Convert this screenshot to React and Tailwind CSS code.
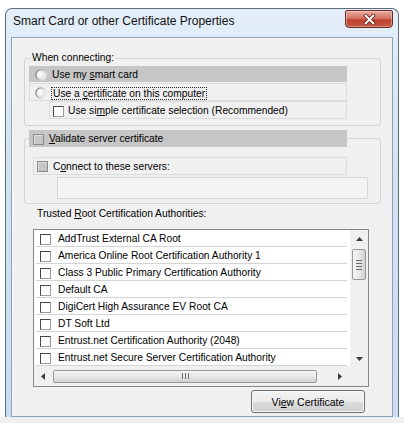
import React from "react";

const FONT = "font-['Liberation_Sans',Arial,sans-serif]";

function Radio() {
  return (
    <svg width="12" height="12" viewBox="0 0 12 12" className="shrink-0">
      <defs>
        <linearGradient id="rgS" x1="0" y1="0" x2="1" y2="0.4">
          <stop offset="0" stopColor="#707070" />
          <stop offset="0.6" stopColor="#b8b8b8" />
          <stop offset="1" stopColor="#ececec" />
        </linearGradient>
        <radialGradient id="rgF" cx="0.4" cy="0.4" r="0.7">
          <stop offset="0" stopColor="#ffffff" />
          <stop offset="1" stopColor="#dcdcdc" />
        </radialGradient>
      </defs>
      <circle cx="6" cy="6" r="5.1" fill="url(#rgF)" stroke="url(#rgS)" strokeWidth="1.3" />
    </svg>
  );
}

function Check({ disabled }) {
  if (disabled) {
    return (
      <span className="block w-[11px] h-[11px] shrink-0 border border-[#8a8a8a] bg-[#c6c6c6] shadow-[inset_1px_1px_0_#dedede]" />
    );
  }
  return (
    <span className="block w-[11px] h-[11px] shrink-0 border border-t-[#474747] border-l-[#474747] border-b-[#9c9c9c] border-r-[#9c9c9c] bg-white" />
  );
}

function ArrowUp() {
  return (
    <svg width="7" height="4" viewBox="0 0 7 4">
      <path d="M0 4 L3.5 0 L7 4 Z" fill="#3c3c3c" />
    </svg>
  );
}
function ArrowDown() {
  return (
    <svg width="7" height="4" viewBox="0 0 7 4">
      <path d="M0 0 L3.5 4 L7 0 Z" fill="#3c3c3c" />
    </svg>
  );
}
function ArrowLeft() {
  return (
    <svg width="4" height="7" viewBox="0 0 4 7">
      <path d="M4 0 L0 3.5 L4 7 Z" fill="#3c3c3c" />
    </svg>
  );
}
function ArrowRight() {
  return (
    <svg width="4" height="7" viewBox="0 0 4 7">
      <path d="M0 0 L4 3.5 L0 7 Z" fill="#3c3c3c" />
    </svg>
  );
}

const items = [
  "AddTrust External CA Root",
  "America Online Root Certification Authority 1",
  "Class 3 Public Primary Certification Authority",
  "Default CA",
  "DigiCert High Assurance EV Root CA",
  "DT Soft Ltd",
  "Entrust.net Certification Authority (2048)",
  "Entrust.net Secure Server Certification Authority",
];

export default function App() {
  return (
    <div className={`w-[404px] h-[423px] bg-white flex flex-col overflow-hidden text-black ${FONT}`}>
      {/* window */}
      <div className="ml-[5px] mt-[8px] w-[394px] h-[409px] border border-b-0 border-[#5d6d7d] rounded-t-[7px] bg-[linear-gradient(to_bottom,#e3eef8,#d2e3f2_40%,#cadcee)] flex flex-col">
        {/* title bar */}
        <div className="h-[28px] flex items-start shrink-0">
          <span className="ml-[7px] mt-[5px] text-[12px] leading-[14px] text-[#111]">
            Smart Card or other Certificate Properties
          </span>
          <div className="ml-auto mr-[5px] mt-[1px] w-[48px] h-[18px] border border-[#6e2b22] rounded-b-[4px] rounded-t-[2px] bg-[linear-gradient(to_bottom,#e9ab9c,#d57565_45%,#c0402f_55%,#c65845)] flex items-center justify-center shadow-[inset_0_0_0_1px_rgba(255,255,255,0.35)]">
            <svg width="13" height="11" viewBox="0 0 13 11">
              <path d="M2.5 1.5 L10.5 9.5 M10.5 1.5 L2.5 9.5" stroke="#5a1d15" strokeWidth="3.6" strokeLinecap="round" />
              <path d="M2.5 1.5 L10.5 9.5 M10.5 1.5 L2.5 9.5" stroke="#ffffff" strokeWidth="2" strokeLinecap="round" />
            </svg>
          </div>
        </div>

        {/* content */}
        <div className="ml-[5px] w-[382px] h-[380px] border border-[#8aa1b8] shadow-[inset_1px_1px_0_#fafafa] bg-[#f0f0f0] flex flex-col text-[10.25px] leading-[12px]">
          {/* group 1 */}
          <fieldset className="mt-[14px] ml-[12px] w-[357px] border border-[#d3d3d3] rounded-[3px] pb-[6px] flex flex-col">
            <legend className="ml-[6px] px-[1px] leading-[12px]">When connecting:</legend>
            <div className="mt-[2px] ml-[4px] w-[318px] h-[16px] bg-[#c6c6c6] flex items-center pt-[1px] pl-[6px] gap-[5px]">
              <Radio />
              <span>
                Use my <u>s</u>mart card
              </span>
            </div>
            <div className="mt-[1px] ml-[4px] w-[318px] h-[18px] border border-[#dcdcdc] flex items-center pt-[2px] pl-[5px] gap-[4px]">
              <Radio />
              <span className="border border-dotted border-[#2a2a2a] px-[1px] leading-[11px]">
                Use a <u>c</u>ertificate on this computer
              </span>
            </div>
            <div className="ml-[24px] w-[298px] h-[18px] border border-[#dcdcdc] flex items-center pt-[2px] pl-[3px] gap-[4px]">
              <Check />
              <span>
                Use si<u>m</u>ple certificate selection (Recommended)
              </span>
            </div>
          </fieldset>

          {/* group 2 */}
          <fieldset className="mt-[4px] ml-[12px] w-[357px] border border-[#d3d3d3] rounded-[3px] pb-[4px] flex flex-col">
            <legend className="ml-[4px] w-[318px] h-[17px] bg-[#c6c6c6] flex items-center pt-[1px] pl-[4px] gap-[5px]">
              <Check disabled />
              <span>
                <u>V</u>alidate server certificate
              </span>
            </legend>
            <div className="mt-[10px] ml-[8px] w-[314px] h-[18px] border border-[#dcdcdc] flex items-center pt-[1px] pl-[3px] gap-[5px]">
              <Check disabled />
              <span>
                C<u>o</u>nnect to these servers:
              </span>
            </div>
            <div className="mt-[2px] ml-[32px] w-[311px] h-[22px] border border-[#d6d6d6] bg-[#f3f3f3]" />
          </fieldset>

          <div className="mt-[4px] ml-[25px]">
            Trusted <u>R</u>oot Certification Authorities:
          </div>

          {/* list */}
          <div className="mt-[9px] ml-[21px] w-[336px] h-[158px] border border-[#828790] bg-white flex flex-col shrink-0">
            <div className="h-[136px] flex">
              <div className="w-[316px] pl-[2px] flex flex-col">
                {items.map((t) => (
                  <div
                    key={t}
                    className="w-[311px] h-[17px] shrink-0 border-b border-[#d4d4d4] flex items-center pt-[2px] pl-[4px] gap-[7px]"
                  >
                    <Check />
                    <span className="whitespace-nowrap">{t}</span>
                  </div>
                ))}
              </div>
              <div className="w-[18px] bg-[#f0f0f0] flex flex-col items-center">
                <div className="h-[17px] w-full flex items-center justify-center">
                  <ArrowUp />
                </div>
                <div className="mt-[2px] w-[14px] h-[31px] border border-[#979797] rounded-[2px] bg-[linear-gradient(to_right,#f6f6f6,#e4e4e4_60%,#d2d2d2)] flex flex-col items-center justify-center gap-[2px]">
                  <span className="block w-[6px] h-px bg-[#6a6a6a]" />
                  <span className="block w-[6px] h-px bg-[#6a6a6a]" />
                  <span className="block w-[6px] h-px bg-[#6a6a6a]" />
                  <span className="block w-[6px] h-px bg-[#6a6a6a]" />
                </div>
                <div className="mt-auto h-[17px] w-full flex items-center justify-center pt-[2px]">
                  <ArrowDown />
                </div>
              </div>
            </div>
            <div className="flex-1 flex items-center bg-[#f0f0f0]">
              <div className="w-[17px] h-full flex items-center justify-center">
                <ArrowLeft />
              </div>
              <div className="ml-[2px] w-[264px] h-[13px] border border-[#979797] rounded-[2px] bg-[linear-gradient(to_bottom,#f6f6f6,#e4e4e4_60%,#d2d2d2)] flex items-center justify-center gap-[2px]">
                <span className="block w-px h-[6px] bg-[#6a6a6a]" />
                <span className="block w-px h-[6px] bg-[#6a6a6a]" />
                <span className="block w-px h-[6px] bg-[#6a6a6a]" />
              </div>
              <div className="ml-auto w-[20px] h-full flex items-center justify-center">
                <ArrowRight />
              </div>
              <div className="w-[18px] h-full bg-[#f0f0f0]" />
            </div>
          </div>

          {/* button */}
          <div className="mt-[3px] ml-[239px] w-[114px] h-[23px] border border-[#707070] rounded-[3px] bg-[linear-gradient(to_bottom,#f3f3f3,#ebebeb_50%,#dddddd_51%,#cfcfcf)] shadow-[inset_0_0_0_1px_#fbfbfb] flex items-center justify-center text-[10.5px]">
            Vi<u>e</u>w Certificate
          </div>
        </div>
      </div>
      <div className="flex-1 bg-[#efefef]" />
    </div>
  );
}
